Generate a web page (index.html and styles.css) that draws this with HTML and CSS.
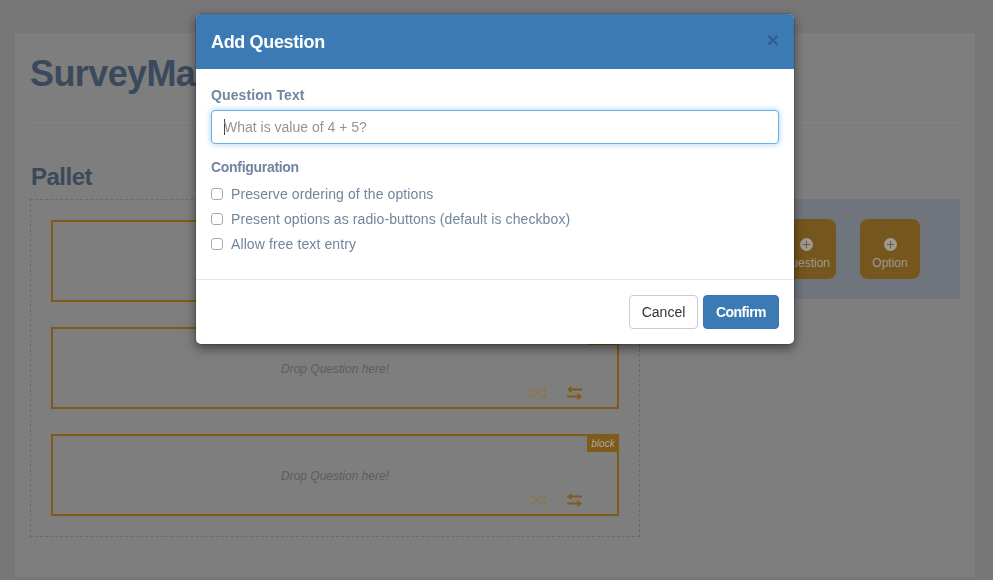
FILE: index.html
```html
<!DOCTYPE html>
<html lang="en">
<head>
    <meta charset="UTF-8">
    <meta name="viewport" content="width=device-width, initial-scale=1.0">
    <title>SurveyMaker</title>
    <link rel="stylesheet" href="styles.css">
</head>
<body>
    <div class="page">
        <h1 class="page-title">SurveyMaker</h1>
        <hr class="page-rule">
        <div class="builder">
            <div class="pallet">
                <h2 class="pallet-title">Pallet</h2>
                <div class="dropzone">
                    <div class="block">
                        <span class="block-tag">block</span>
                        <div class="drop-text">Drop Question here!</div>
                        <div class="block-actions">
                            <svg class="icon icon-shuffle" viewBox="0 0 18 14"><path d="M0 3.500h3c4 0 6 7 10 7h1.500M0 10.500h3c1.500 0 2.500-1 3.500-2.500M8.500 5.500c1-1.200 2.500-2 4.500-2h1.500" fill="none" stroke="currentColor" stroke-width="1.600"/><path d="M14.500 .5l3.500 3-3.500 3zM14.500 7.500l3.500 3-3.500 3z" fill="currentColor"/></svg>
                            <svg class="icon icon-exchange" viewBox="0 0 15 14"><path d="M4.500 0v2.400H15v2.200H4.500V7L0 3.500zM10.500 7v2.400H0v2.200h10.500V14l4.500-3.500z" fill="currentColor"/></svg>
                        </div>
                    </div>
                    <div class="block">
                        <span class="block-tag">block</span>
                        <div class="drop-text">Drop Question here!</div>
                        <div class="block-actions">
                            <svg class="icon icon-shuffle" viewBox="0 0 18 14"><path d="M0 3.500h3c4 0 6 7 10 7h1.500M0 10.500h3c1.500 0 2.500-1 3.500-2.500M8.500 5.500c1-1.200 2.500-2 4.500-2h1.500" fill="none" stroke="currentColor" stroke-width="1.600"/><path d="M14.500 .5l3.500 3-3.500 3zM14.500 7.500l3.500 3-3.500 3z" fill="currentColor"/></svg>
                            <svg class="icon icon-exchange" viewBox="0 0 15 14"><path d="M4.500 0v2.400H15v2.200H4.500V7L0 3.500zM10.500 7v2.400H0v2.200h10.500V14l4.500-3.500z" fill="currentColor"/></svg>
                        </div>
                    </div>
                    <div class="block">
                        <span class="block-tag">block</span>
                        <div class="drop-text">Drop Question here!</div>
                        <div class="block-actions">
                            <svg class="icon icon-shuffle" viewBox="0 0 18 14"><path d="M0 3.500h3c4 0 6 7 10 7h1.500M0 10.500h3c1.500 0 2.500-1 3.500-2.500M8.500 5.500c1-1.200 2.500-2 4.500-2h1.500" fill="none" stroke="currentColor" stroke-width="1.600"/><path d="M14.500 .5l3.500 3-3.500 3zM14.500 7.500l3.500 3-3.500 3z" fill="currentColor"/></svg>
                            <svg class="icon icon-exchange" viewBox="0 0 15 14"><path d="M4.500 0v2.400H15v2.200H4.500V7L0 3.500zM10.500 7v2.400H0v2.200h10.500V14l4.500-3.500z" fill="currentColor"/></svg>
                        </div>
                    </div>
                </div>
            </div>
            <div class="toolbox">
                <div class="tool">
                    <svg class="tool-icon" viewBox="0 0 14 14"><circle cx="7" cy="7" r="7" fill="currentColor"/><path d="M7 3v8M3 7h8" stroke="#75561c" stroke-width="1"/></svg>
                    Question
                </div>
                <div class="tool">
                    <svg class="tool-icon" viewBox="0 0 14 14"><circle cx="7" cy="7" r="7" fill="currentColor"/><path d="M7 3v8M3 7h8" stroke="#75561c" stroke-width="1"/></svg>
                    Option
                </div>
            </div>
        </div>
    </div>

    <div class="modal">
        <div class="modal-header">
            <span class="modal-title">Add Question</span>
            <span class="modal-close">&times;</span>
        </div>
        <div class="modal-body">
            <label class="field-label" for="questionText">Question Text</label>
            <input class="text-input" id="questionText" type="text" placeholder="What is value of 4 + 5?">
            <div class="field-label config-label">Configuration</div>
            <label class="check-row"><input type="checkbox"> Preserve ordering of the options</label>
            <label class="check-row"><input type="checkbox"> Present options as radio-buttons (default is checkbox)</label>
            <label class="check-row"><input type="checkbox"> Allow free text entry</label>
        </div>
        <div class="modal-footer">
            <button class="btn btn-cancel">Cancel</button>
            <button class="btn btn-confirm">Confirm</button>
        </div>
    </div>
</body>
</html>
```

FILE: styles.css
```css
html, body {
    height: 100%;
}

body {
    margin: 0;
    overflow: hidden;
    background-color: #777;
    font-family: "Liberation Sans", Arial, sans-serif;
    font-size: 14px;
}

.page {
    box-sizing: border-box;
    height: 544px;
    margin: 33px 18px 0 15px;
    padding: 0 15px;
    background-color: #7e7e7e;
}

.page-title {
    margin: 0;
    padding-top: 21px;
    font-size: 36px;
    line-height: 40px;
    font-weight: bold;
    letter-spacing: -0.6px;
    color: #3a495b;
}

.page-rule {
    margin: 28px 0 0;
    border: none;
    border-top: 1px solid #848484;
}

.builder {
    display: flex;
    align-items: flex-end;
}

.pallet {
    width: 610px;
}

.pallet-title {
    margin: 0;
    padding: 41px 0 9px 1px;
    font-size: 24px;
    line-height: 26px;
    font-weight: bold;
    letter-spacing: -0.5px;
    color: #3a495b;
}

.dropzone {
    padding: 20px;
    border: 1px dashed #6a6a6a;
}

.block {
    position: relative;
    box-sizing: border-box;
    height: 82px;
    margin-bottom: 25px;
    padding-top: 30px;
    border: 2px solid #7f5a18;
}

.block:last-child {
    margin-bottom: 0;
}

.block-tag {
    position: absolute;
    top: -2px;
    right: -2px;
    width: 32px;
    height: 18px;
    background-color: #7f5a18;
    color: #aba79e;
    font-size: 10px;
    font-style: italic;
    line-height: 19px;
    text-align: center;
}

.drop-text {
    font-size: 12px;
    font-style: italic;
    line-height: 20px;
    text-align: center;
    color: #5d5d5d;
}

.block-actions {
    display: flex;
    justify-content: flex-end;
    gap: 20px;
    margin-top: 7px;
    padding-right: 35px;
}

.icon {
    height: 14px;
}

.icon-shuffle {
    width: 18px;
    color: #8b7650;
}

.icon-exchange {
    width: 15px;
    color: #7f5a18;
}

.toolbox {
    display: flex;
    justify-content: flex-end;
    gap: 24px;
    flex-grow: 1;
    box-sizing: border-box;
    height: 100px;
    margin-bottom: 238px;
    padding: 20px 40px 0 0;
    background-color: #70757d;
}

.tool {
    display: flex;
    flex-direction: column;
    align-items: center;
    box-sizing: border-box;
    width: 60px;
    height: 60px;
    padding-top: 19px;
    border-radius: 8px;
    background-color: #75561c;
    color: #9c9a94;
    font-size: 12px;
    line-height: 16px;
}

.tool-icon {
    width: 13px;
    height: 13px;
    margin-bottom: 4px;
}

.modal {
    position: fixed;
    top: 14px;
    left: 196px;
    width: 598px;
    border-radius: 5px;
    background-color: #fff;
    box-shadow: 0 4px 11px rgba(0, 0, 0, 0.5), 0 0 0 1px rgba(0, 0, 0, 0.12);
    overflow: hidden;
}

.modal-header {
    display: flex;
    justify-content: space-between;
    height: 55px;
    padding: 0 15px;
    background-color: #3c7ab3;
}

.modal-title {
    color: #fff;
    font-size: 18px;
    font-weight: bold;
    letter-spacing: -0.35px;
    line-height: 56px;
}

.modal-close {
    color: #2f5f90;
    font-size: 21px;
    font-weight: bold;
    line-height: 52px;
}

.modal-body {
    height: 211px;
    padding: 16px 15px 0;
    box-sizing: border-box;
    border-bottom: 1px solid #e5e5e5;
}

.field-label {
    display: block;
    color: #6f85a0;
    font-size: 14px;
    font-weight: bold;
    line-height: 20px;
    letter-spacing: 0.1px;
}

.text-input {
    display: block;
    box-sizing: border-box;
    width: 100%;
    height: 34px;
    margin-top: 5px;
    padding: 0 12px;
    border: 1px solid #66afe9;
    border-radius: 4px;
    outline: none;
    background: #fff linear-gradient(#444, #444) no-repeat 12px center / 1px 16px;
    box-shadow: 0 0 6px rgba(102, 175, 233, 0.6);
    font-family: inherit;
    font-size: 14px;
}

.text-input::placeholder {
    color: #949494;
}

.config-label {
    margin-top: 13px;
    margin-bottom: 4px;
    letter-spacing: -0.3px;
}

.check-row {
    display: flex;
    align-items: center;
    height: 25px;
    color: #71859e;
    font-size: 14px;
    letter-spacing: 0.1px;
}

.check-row input {
    appearance: none;
    box-sizing: border-box;
    width: 12px;
    height: 12px;
    margin: 0 8px 0 0;
    border: 1px solid #aaa;
    border-radius: 3px;
    background-color: #fff;
}

.modal-footer {
    display: flex;
    justify-content: flex-end;
    gap: 5px;
    height: 64px;
    padding: 15px;
    box-sizing: border-box;
}

.btn {
    height: 34px;
    border: 1px solid #ccc;
    border-radius: 4px;
    background-color: #fff;
    color: #333;
    font-family: inherit;
    font-size: 14px;
}

.btn-cancel {
    width: 69px;
    padding: 0;
}

.btn-confirm {
    width: 76px;
    padding: 0;
    border-color: #3a76ae;
    background-color: #3c7ab3;
    color: #fff;
    font-weight: bold;
    letter-spacing: -0.5px;
}
```
